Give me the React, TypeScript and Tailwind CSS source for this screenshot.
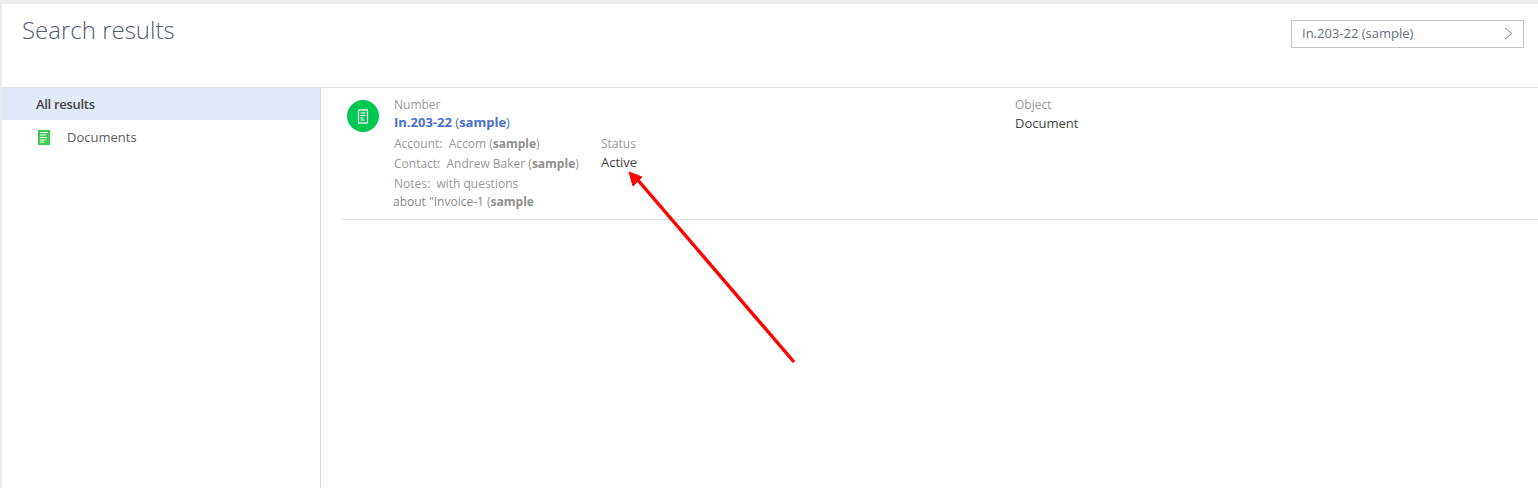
const font = { fontFamily: '"Open Sans", sans-serif' }

function DocGlyph() {
  return (
    <svg width="12" height="15" viewBox="0 0 12 15" fill="none">
      <rect x="1.5" y="1" width="9" height="13" stroke="white" strokeWidth="1.2" />
      <path d="M3.5 4h5M3.5 6.5h5M3.5 9h3M3.5 11h4" stroke="white" strokeWidth="1" />
    </svg>
  )
}

function SideDocIcon() {
  return (
    <svg width="12" height="15" viewBox="0 0 12 15">
      <rect width="12" height="15" fill="#3ecb4f" />
      <path d="M2 2.5h8M2 5h6M2 7.5h7M2 10h6M2 12h4" stroke="white" strokeWidth="1" />
    </svg>
  )
}

function Mark({ children }: { children: React.ReactNode }) {
  return <b className="font-bold text-[#8f8f8f]">{children}</b>
}

export default function App() {
  return (
    <div className="relative h-[488px] w-[1538px] overflow-hidden bg-[#e9ebec] pt-[4px] pl-[2px] text-[13px]" style={font}>
      <div className="flex h-[484px] flex-col bg-white">
        <header className="flex h-[84px] shrink-0 items-start justify-between border-b border-[#e0e0e0] pt-[8px] pr-[14px] pl-[20px]">
          <h1 className="text-[24px] leading-[36px] font-light text-[#4f5a75]">Search results</h1>
          <button className="mt-[8px] flex h-[28px] w-[233px] items-center justify-between border border-[#c4c4c4] pr-[10px] pl-[10px] text-[#666f7d]">
            <span>In.203-22 (sample)</span>
            <svg width="9" height="13" viewBox="0 0 9 13" fill="none" className="-mt-[2px]">
              <path d="M1 1l7 5.5L1 12" stroke="#8a8a8a" strokeWidth="1" />
            </svg>
          </button>
        </header>

        <div className="flex min-h-0 flex-1">
          <aside className="w-[319px] shrink-0 border-r border-[#d9d9d9]">
            <div className="flex h-[32px] items-center bg-[#e2e9f9] pt-[2px] pl-[34px] font-semibold tracking-[-0.3px] text-[#444]">All results</div>
            <div className="flex h-[34px] items-center pl-[36px] text-[#5c5c5c]">
              <SideDocIcon />
              <span className="ml-[17px] pt-[2px]">Documents</span>
            </div>
          </aside>

          <main className="min-w-0 flex-1 pl-[20px]">
            <div className="flex h-[132px] border-b border-[#e0e0e0] pt-[7px] text-[12px] leading-[19px] text-[#9a9a9a]">
              <div className="mt-[5px] ml-[6px] flex h-[32px] w-[32px] shrink-0 items-center justify-center rounded-full bg-[#00c853]">
                <DocGlyph />
              </div>
              <div className="ml-[15px] w-[207px] shrink-0">
                <div className="h-[18px]">Number</div>
                <div className="h-[21px] text-[13px] font-bold text-[#4a6fd0]">
                  In.203-22 <span className="font-normal">(</span>sample<span className="font-normal">)</span>
                </div>
                <div className="h-[20px]">Account:&nbsp; Accom (<Mark>sample</Mark>)</div>
                <div className="h-[20px] whitespace-nowrap">Contact:&nbsp; Andrew Baker (<Mark>sample</Mark>)</div>
                <div className="h-[18px]">Notes:&nbsp; with questions</div>
                <div className="-ml-px text-[#8a8a8a]">about "Invoice-1 (<Mark>sample</Mark></div>
              </div>
              <div className="w-[414px] shrink-0 pt-[39px]">
                <div className="h-[19px]">Status</div>
                <div className="text-[13px] text-[#444]">Active</div>
              </div>
              <div>
                <div className="h-[19px]">Object</div>
                <div className="text-[13px] text-[#444]">Document</div>
              </div>
            </div>
          </main>
        </div>
      </div>

      <svg className="absolute top-0 left-0" width="1538" height="488" fill="none">
        <path d="M794 362L637 179" stroke="#ff0000" strokeWidth="3.4" />
        <path d="M629 172L642 177L633 186Z" fill="#ff0000" stroke="#ff0000" strokeWidth="1" />
      </svg>
    </div>
  )
}
